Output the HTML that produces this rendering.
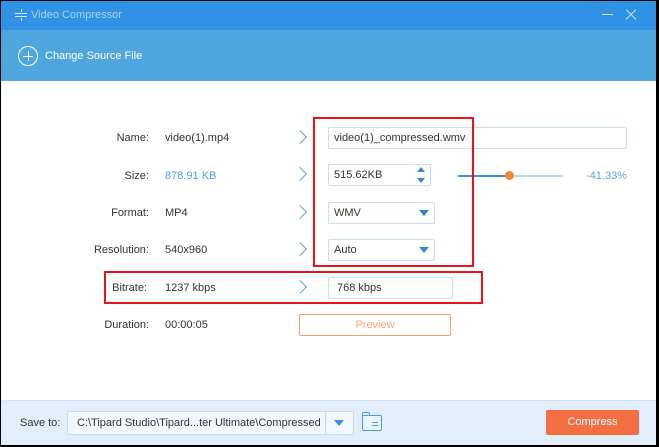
<!DOCTYPE html>
<html><head><style>
*{margin:0;padding:0;box-sizing:border-box}
body{width:659px;height:447px;background:#000;position:relative;overflow:hidden;font-family:"Liberation Sans",sans-serif;font-size:11px;color:#333}
.win{position:absolute;left:1px;top:1px;width:655px;height:444px;background:#fff;overflow:hidden}
.a{position:absolute}
.title{left:0;top:0;width:655px;height:29px;background:#2f92e4}
.sub{left:0;top:29px;width:655px;height:51px;background:#4fa6df}
.lbl{width:150px;text-align:right;left:-2px}
.inp{border:1px solid #c9ddf0;border-radius:2px;background:#fff;padding-left:5px;line-height:21px}
.chev{width:10px;height:10px;border-top:1px solid #5aa6e6;border-right:1px solid #5aa6e6;transform:rotate(45deg)}
.tri{width:0;height:0;border-left:5px solid transparent;border-right:5px solid transparent;border-top:6px solid #2e86d6}
</style></head><body><div class="win">
<div class="a title"></div>
<div class="a" style="left:14px;top:12px;width:12px;height:1px;background:#d8ecfb"></div>
<div class="a" style="left:14px;top:15px;width:12px;height:1px;background:#d8ecfb"></div>
<div class="a" style="left:19.5px;top:8px;width:1px;height:3px;background:#d8ecfb"></div>
<div class="a" style="left:19.5px;top:17px;width:1px;height:3px;background:#d8ecfb"></div>
<div class="a" style="left:30px;top:8px;font-size:11px;color:#a9d3f5">Video Compressor</div>
<div class="a" style="left:601px;top:13px;width:11px;height:1px;background:#cfe6fa"></div>
<div class="a" style="left:623px;top:13px;width:14px;height:1px;background:#cfe6fa;transform:rotate(45deg)"></div>
<div class="a" style="left:623px;top:13px;width:14px;height:1px;background:#cfe6fa;transform:rotate(-45deg)"></div>
<div class="a sub"></div>
<div class="a" style="left:17px;top:45px;width:20px;height:20px;border:1.3px solid #fff;border-radius:50%"></div>
<div class="a" style="left:22px;top:54.5px;width:10px;height:1.3px;background:#fff"></div>
<div class="a" style="left:26.5px;top:50px;width:1.3px;height:10px;background:#fff"></div>
<div class="a" style="left:44px;top:49px;color:#fff;font-size:11px">Change Source File</div>

<div class="a lbl" style="top:131px">Name:</div><div class="a" style="left:164px;top:131px">video(1).mp4</div>
<div class="a lbl" style="top:169px">Size:</div><div class="a" style="left:164px;top:169px;color:#4a9fe6">878.91 KB</div>
<div class="a lbl" style="top:206px">Format:</div><div class="a" style="left:164px;top:206px">MP4</div>
<div class="a lbl" style="top:243px">Resolution:</div><div class="a" style="left:164px;top:243px">540x960</div>
<div class="a lbl" style="top:281px;left:-4px">Bitrate:</div><div class="a" style="left:164px;top:281px">1237 kbps</div>
<div class="a lbl" style="top:318px">Duration:</div><div class="a" style="left:164px;top:318px">00:00:05</div>

<div class="a chev" style="left:294px;top:131px"></div>
<div class="a chev" style="left:294px;top:168px"></div>
<div class="a chev" style="left:294px;top:206px"></div>
<div class="a chev" style="left:294px;top:243px"></div>
<div class="a chev" style="left:294px;top:281px"></div>

<div class="a inp" style="left:327px;top:126px;width:299px;height:22px;font-size:11px">video(1)_compressed.wmv</div>
<div class="a inp" style="left:327px;top:163px;width:103px;height:22px">515.62KB</div>
<div class="a" style="left:416px;top:166px;border-left:4px solid transparent;border-right:4px solid transparent;border-bottom:5px solid #2e86d6"></div>
<div class="a" style="left:416px;top:177px;border-left:4px solid transparent;border-right:4px solid transparent;border-top:5px solid #2e86d6"></div>
<div class="a inp" style="left:327px;top:201px;width:107px;height:22px">WMV</div>
<div class="a tri" style="left:418px;top:209px"></div>
<div class="a inp" style="left:327px;top:238px;width:107px;height:22px">Auto</div>
<div class="a tri" style="left:418px;top:246px"></div>
<div class="a inp" style="left:327px;top:276px;width:125px;height:22px;padding-left:8px">768 kbps</div>

<div class="a" style="left:457px;top:174px;width:52px;height:2px;background:#3a8fdc"></div>
<div class="a" style="left:509px;top:174px;width:53px;height:2px;background:#b7d9f3"></div>
<div class="a" style="left:504px;top:170px;width:9px;height:9px;border-radius:50%;background:#f5872f"></div>
<div class="a" style="left:585px;top:169px;color:#5aa6e6">-41.33%</div>

<div class="a" style="left:298px;top:313px;width:152px;height:22px;border:1px solid #f0a070;border-radius:2px;color:#f5a878;text-align:center;line-height:20px">Preview</div>

<div class="a" style="left:312px;top:116px;width:161px;height:150px;border:2px solid #e8141a"></div>
<div class="a" style="left:103px;top:270px;width:379px;height:33px;border:2px solid #e8141a"></div>

<div class="a" style="left:0;top:399px;width:655px;height:45px;background:#e2eefb;border-top:1px solid #cfe0f2"></div>
<div class="a" style="left:19px;top:416px">Save to:</div>
<div class="a" style="left:66px;top:410px;width:287px;height:24px;border:1px solid #c6daee;background:#f1f7fd;border-radius:2px"></div>
<div class="a" style="left:76px;top:416px;font-size:11px">C:\Tipard Studio\Tipard...ter Ultimate\Compressed</div>
<div class="a" style="left:324px;top:411px;width:1px;height:22px;background:#c6daee"></div>
<div class="a tri" style="left:333px;top:419px;border-top-color:#3d8fd8"></div>
<div class="a" style="left:361px;top:414px;width:20px;height:16px;border:1.3px solid #4a9be0;border-radius:2px;background:#eaf4fd"></div>
<div class="a" style="left:361px;top:411px;width:8px;height:4px;border:1.3px solid #4a9be0;border-bottom:none;border-radius:2px 2px 0 0"></div>
<div class="a" style="left:371px;top:421px;width:6px;height:1px;background:#4a9be0"></div>
<div class="a" style="left:371px;top:424px;width:6px;height:1px;background:#4a9be0"></div>
<div class="a" style="left:545px;top:409px;width:93px;height:25px;background:#f36f42;border-radius:2px;color:#fff;text-align:center;line-height:25px">Compress</div>
</div></body></html>
